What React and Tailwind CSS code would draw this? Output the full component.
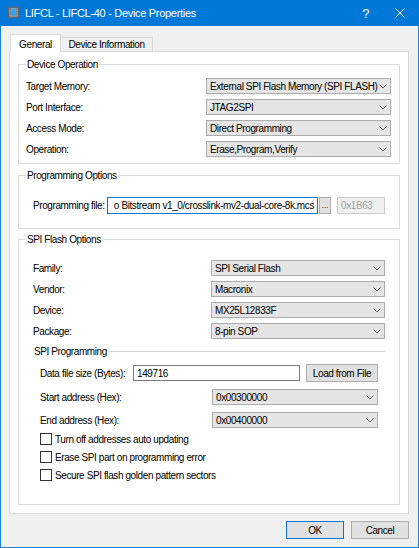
import React from 'react';

const Chevron = () => (
  <svg width="8" height="5" viewBox="0 0 8 5" className="shrink-0">
    <polyline points="0.5,0.5 4,4 7.5,0.5" fill="none" stroke="#6d6d6d" strokeWidth="1" />
  </svg>
);

const Select = ({ value, className = '' }) => (
  <div
    className={`flex items-center justify-between h-[16px] pl-[3px] pr-[3px] bg-[#e5e5e5] border border-[#adadad] shrink-0 ${className}`}
  >
    <span className="whitespace-nowrap">{value}</span>
    <Chevron />
  </div>
);

const Row = ({ label, children, className = '' }) => (
  <div className={`flex items-center justify-between ${className}`}>
    <span className="whitespace-nowrap">{label}</span>
    {children}
  </div>
);

const Check = ({ label }) => (
  <div className="flex items-center h-[18px] gap-[3px]">
    <div className="w-[12px] h-[12px] bg-white border border-[#333333]" />
    <span>{label}</span>
  </div>
);

const Group = ({ title, className = '', children }) => (
  <fieldset className={`border border-[#dcdcdc] pl-[7px] ${className}`}>
    <legend className="px-[1px] leading-[13px]">{title}</legend>
    {children}
  </fieldset>
);

const AppIcon = () => (
  <svg width="13" height="14" viewBox="0 0 13 14">
    <rect x="1.5" y="1.5" width="10" height="10" fill="#8a96a3" stroke="#5b6670" />
    <line x1="3" y1="0" x2="3" y2="13" stroke="#5b6670" strokeDasharray="1 1.5" />
    <line x1="10" y1="0" x2="10" y2="13" stroke="#5b6670" strokeDasharray="1 1.5" />
    <path d="M5 3 h3 v3.5 h2 l-3.5 4 l-3.5 -4 h2 z" fill="#2aa7f0" />
  </svg>
);

export default function App() {
  return (
    <div className="w-[419px] h-[548px] flex flex-col bg-[#f0f0f0] border-x border-b border-[#1a82d6] text-[10px] tracking-[-0.4px] leading-[13px] text-black font-['Liberation_Sans',Arial,sans-serif]">
      {/* title bar */}
      <div className="h-[26px] -mx-px shrink-0 bg-[#0078d7] flex items-center pl-[7px] text-white">
        <AppIcon />
        <span className="ml-[5px] text-[11px] tracking-[-0.3px]">
          LIFCL - LIFCL-40 - Device Properties
        </span>
        <span className="ml-auto mr-[26px] text-[13px]">?</span>
        <svg width="10" height="10" viewBox="0 0 10 10" className="mr-[14px]">
          <path d="M0.5 0.5 L9.5 9.5 M9.5 0.5 L0.5 9.5" stroke="#fff" strokeWidth="1" />
        </svg>
      </div>

      <div className="pt-[8px] pl-[8px]">
        {/* tabs */}
        <div className="flex items-end h-[18px] -mb-px ml-[1px]">
          <div className="relative z-10 h-[18px] w-[51px] bg-white border-x border-t border-[#d9d9d9] flex items-center justify-center pt-[1px]">
            General
          </div>
          <div className="h-[14px] mb-px w-[92px] bg-[#f0f0f0] border-r border-t border-[#d9d9d9] flex items-center justify-center whitespace-nowrap">
            Device Information
          </div>
        </div>

        {/* panel */}
        <div className="w-[400px] h-[463px] bg-white border border-[#d9d9d9] px-[8px] pt-[6px]">
          <Group title="Device Operation" className="pr-[8px] pt-[7px] pb-[6px]">
            <div className="flex flex-col gap-[5px]">
              <Row label="Target Memory:">
                <Select value="External SPI Flash Memory (SPI FLASH)" className="w-[185px]" />
              </Row>
              <Row label="Port Interface:">
                <Select value="JTAG2SPI" className="w-[185px]" />
              </Row>
              <Row label="Access Mode:">
                <Select value="Direct Programming" className="w-[185px]" />
              </Row>
              <Row label="Operation:">
                <Select value="Erase,Program,Verify" className="w-[185px]" />
              </Row>
            </div>
          </Group>

          <Group title="Programming Options" className="mt-[5px] pt-[15px] pb-[14px]">
            <div className="flex items-center h-[17px] pl-[7px]">
              <span className="whitespace-nowrap w-[74px] shrink-0">Programming file:</span>
              <div className="w-[211px] h-[17px] shrink-0 bg-white border border-[#0078d7] flex items-center justify-end pr-[3px]">
                <span className="whitespace-nowrap">
                  o Bitstream v1_0/crosslink-mv2-dual-core-8k.mcs
                </span>
              </div>
              <div className="ml-[1px] w-[12px] h-[17px] shrink-0 bg-[#e1e1e1] border border-[#adadad] flex items-end justify-center pb-[3px] text-[8px] leading-[8px] tracking-normal">
                ...
              </div>
              <div className="ml-[6px] w-[48px] h-[17px] shrink-0 bg-[#f0f0f0] border border-[#cccccc] text-[#a0a0a0] flex items-center pl-[3px]">
                0x1B63
              </div>
            </div>
          </Group>

          <Group title="SPI Flash Options" className="mt-[4px] pr-[14px] pt-[14px] pb-[20px]">
            <div className="pl-[7px]">
              <div className="flex flex-col gap-[5px]">
                <Row label="Family:">
                  <Select value="SPI Serial Flash" className="w-[174px]" />
                </Row>
                <Row label="Vendor:">
                  <Select value="Macronix" className="w-[174px]" />
                </Row>
                <Row label="Device:">
                  <Select value="MX25L12833F" className="w-[174px]" />
                </Row>
                <Row label="Package:">
                  <Select value="8-pin SOP" className="w-[174px]" />
                </Row>
              </div>

              <div className="mt-[6px] flex items-center ml-[1px]">
                <span className="whitespace-nowrap pr-[2px]">SPI Programming</span>
                <div className="flex-1 h-[2px] border-t border-b border-t-[#d5d5d5] border-b-white" />
              </div>

              <div className="pl-[7px] pr-[7px]">
                <div className="mt-[6px] flex items-center h-[18px]">
                  <span className="w-[93px] shrink-0 whitespace-nowrap">Data file size (Bytes):</span>
                  <div className="w-[167px] h-[16px] shrink-0 bg-white border border-[#7a7a7a] flex items-center pl-[3px]">
                    149716
                  </div>
                  <div className="ml-auto w-[72px] h-[18px] shrink-0 bg-[#e1e1e1] border border-[#adadad] flex items-center justify-center whitespace-nowrap">
                    Load from File
                  </div>
                </div>
                <div className="mt-[7px] flex flex-col gap-[7px]">
                  <Row label="Start address (Hex):">
                    <Select value="0x00300000" className="w-[166px]" />
                  </Row>
                  <Row label="End address (Hex):">
                    <Select value="0x00400000" className="w-[166px]" />
                  </Row>
                </div>
                <div className="mt-[2px] flex flex-col">
                  <Check label="Turn off addresses auto updating" />
                  <Check label="Erase SPI part on programming error" />
                  <Check label="Secure SPI flash golden pattern sectors" />
                </div>
              </div>
            </div>
          </Group>
        </div>

        {/* buttons */}
        <div className="w-[400px] flex justify-end gap-[7px] pt-[7px]">
          <div className="w-[58px] h-[18px] bg-[#e1e1e1] border border-[#0078d7] flex items-center justify-center">
            OK
          </div>
          <div className="w-[58px] h-[18px] bg-[#e1e1e1] border border-[#adadad] flex items-center justify-center">
            Cancel
          </div>
        </div>
      </div>
    </div>
  );
}
